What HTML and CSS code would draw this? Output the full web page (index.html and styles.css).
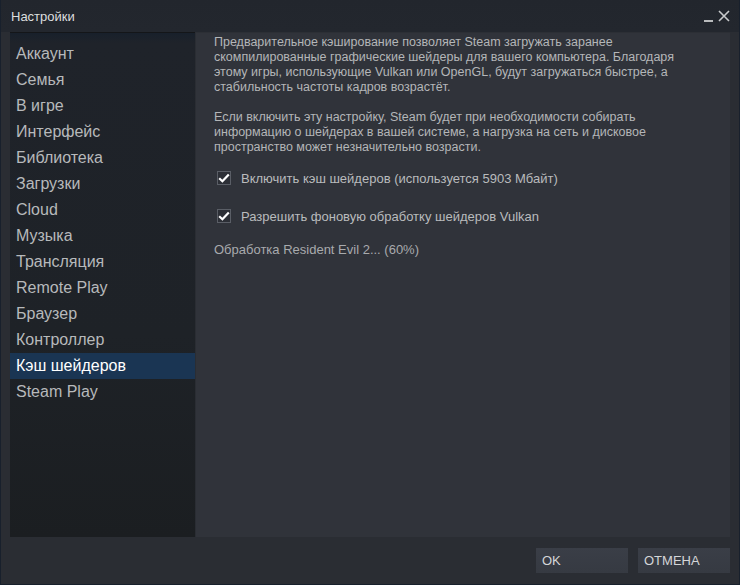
FILE: index.html
```html
<!DOCTYPE html>
<html lang="ru">
<head>
<meta charset="utf-8">
<title>Настройки</title>
<link rel="stylesheet" href="styles.css">
</head>
<body>
<div class="window">
  <div class="titlebar">
    <span class="title">Настройки</span>
    <div class="controls">
      <span class="minimize"></span>
      <svg class="close" width="12" height="12" viewBox="0 0 12 12"><path d="M1 1L11 11M11 1L1 11" stroke="#c8cacc" stroke-width="1.6"/></svg>
    </div>
  </div>
  <div class="main">
    <nav class="sidebar">
      <div class="item">Аккаунт</div>
      <div class="item">Семья</div>
      <div class="item">В игре</div>
      <div class="item">Интерфейс</div>
      <div class="item">Библиотека</div>
      <div class="item">Загрузки</div>
      <div class="item">Cloud</div>
      <div class="item">Музыка</div>
      <div class="item">Трансляция</div>
      <div class="item">Remote Play</div>
      <div class="item">Браузер</div>
      <div class="item">Контроллер</div>
      <div class="item active">Кэш шейдеров</div>
      <div class="item">Steam Play</div>
    </nav>
    <section class="content">
      <p class="para">Предварительное кэширование позволяет Steam загружать заранее скомпилированные графические шейдеры для вашего компьютера. Благодаря этому игры, использующие Vulkan или OpenGL, будут загружаться быстрее, а стабильность частоты кадров возрастёт.</p>
      <p class="para">Если включить эту настройку, Steam будет при необходимости собирать информацию о шейдерах в вашей системе, а нагрузка на сеть и дисковое пространство может незначительно возрасти.</p>
      <label class="check first"><span class="box"><svg width="12" height="10" viewBox="0 0 12 10"><path d="M1.2 5.2L4.4 8.2L10.8 1.4" fill="none" stroke="#ffffff" stroke-width="2.2"/></svg></span>Включить кэш шейдеров (используется 5903 Мбайт)</label>
      <label class="check second"><span class="box"><svg width="12" height="10" viewBox="0 0 12 10"><path d="M1.2 5.2L4.4 8.2L10.8 1.4" fill="none" stroke="#ffffff" stroke-width="2.2"/></svg></span>Разрешить фоновую обработку шейдеров Vulkan</label>
      <div class="status">Обработка Resident Evil 2... (60%)</div>
    </section>
  </div>
  <div class="footer">
    <button class="btn">OK</button>
    <button class="btn">ОТМЕНА</button>
  </div>
</div>
</body>
</html>
```
FILE: styles.css
```css
* { box-sizing: border-box; }
html, body { margin: 0; padding: 0; }
body {
  width: 740px;
  height: 585px;
  background: #1b2330;
  font-family: "Liberation Sans", Arial, sans-serif;
  overflow: hidden;
}
.window {
  width: 740px;
  height: 585px;
  border: 1px solid #18202c;
  border-top: none;
  background: #2a2d33;
  display: flex;
  flex-direction: column;
}
.titlebar {
  height: 32px;
  flex: none;
  display: flex;
  align-items: center;
  justify-content: space-between;
  padding: 0 9px 0 10px;
  background: linear-gradient(#22262d, #23272e);
}
.title {
  color: #dcdedf;
  font-size: 13px;
}
.controls {
  display: flex;
  align-items: center;
  gap: 5px;
}
.minimize {
  width: 9px;
  height: 2px;
  background: #b9bbbd;
  margin-top: 9px;
}
.close { display: block; margin-bottom: 1px; }
.main {
  display: flex;
  height: 505px;
  flex: none;
  margin-left: 9px;
  margin-right: 9px;
  gap: 1px;
}
.sidebar {
  width: 185px;
  flex: none;
  border-top: 1px solid #141619;
  background: linear-gradient(#18202b 0px, #1f232a 10px, #1e2227 60%, #1b1e21 100%);
  padding-top: 8px;
}
.item {
  height: 26px;
  line-height: 26px;
  padding-left: 6px;
  font-size: 16px;
  color: #b7b9bb;
  white-space: nowrap;
}
.item.active {
  background: #1a3553;
  color: #ffffff;
}
.content {
  flex: 1;
  background: #30333a;
  border-top: 1px solid #2c2f35;
  padding: 2px 28px 0 18px;
  color: #b4b6b8;
  font-size: 12.5px;
  line-height: 15px;
}
.para {
  margin: 0 0 15px 0;
}
.check {
  display: flex;
  align-items: center;
  gap: 10px;
  height: 16px;
  font-size: 13px;
  color: #b9bbbd;
}
.check.first { margin-top: 2px; padding-left: 3px; }
.check.second { margin-top: 22px; padding-left: 3px; }
.box {
  width: 14px;
  height: 14px;
  border: 1px solid #5a5e66;
  background: #2c2f36;
  display: flex;
  align-items: center;
  justify-content: center;
}
.box svg { display: block; }
.status {
  margin-top: 18px;
  font-size: 13px;
  color: #a8aaad;
}
.footer {
  flex: 1;
  display: flex;
  justify-content: flex-end;
  align-items: flex-start;
  gap: 10px;
  padding: 11px 9px 0 0;
}
.btn {
  width: 92px;
  height: 25px;
  border: none;
  background: linear-gradient(#3a3e47, #363a42);
  color: #d4d6d8;
  font-family: "Liberation Sans", Arial, sans-serif;
  font-size: 13px;
  text-align: left;
  padding: 0 6px;
}
```
